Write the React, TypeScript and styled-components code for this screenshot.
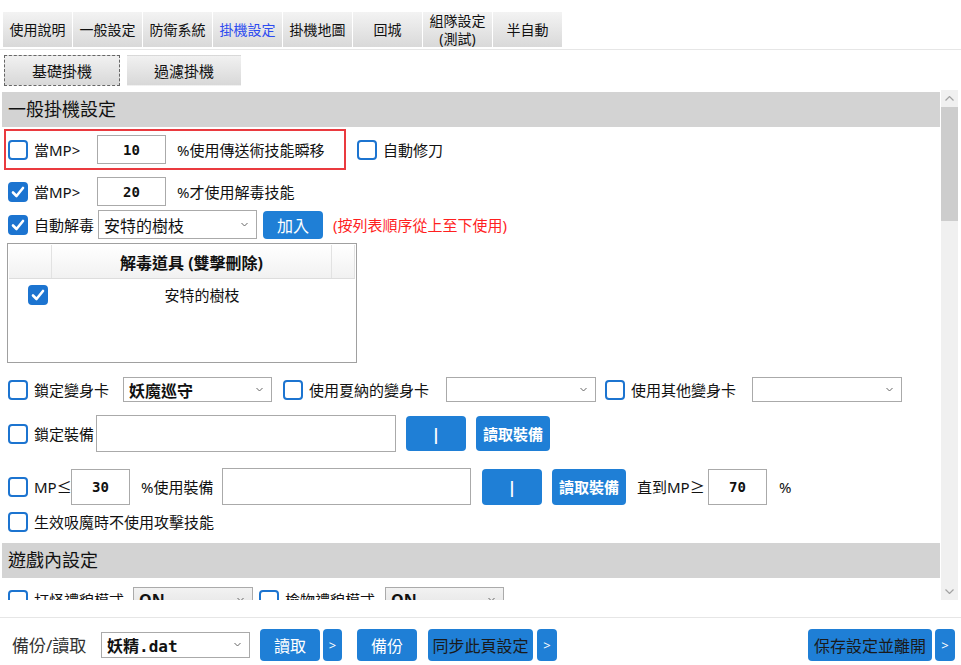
import styled, { createGlobalStyle } from "styled-components";

// 全体スタイル
const GlobalStyle = createGlobalStyle`
  *, *::before, *::after { box-sizing: border-box; }
  html, body { margin: 0; padding: 0; background: #fff; }
  body {
    font-family: "Noto Sans", "Noto Sans CJK TC", sans-serif;
    color: #111;
  }
`;

const BLUE = "#1f7fd6";

const Page = styled.div`
  width: 961px;
  height: 665px;
  display: flex;
  flex-direction: column;
  overflow: hidden;
  background: #fff;
`;

// タブ
const TabBar = styled.div`
  display: flex;
  gap: 1px;
  height: 50px;
  padding: 12px 0 2px 3px;
  border-bottom: 1px solid #e6e6e6;
`;

const Tab = styled.div<{ $active?: boolean }>`
  width: 69px;
  height: 35px;
  display: flex;
  align-items: center;
  justify-content: center;
  text-align: center;
  font-size: 14px;
  line-height: 18px;
  color: ${(p) => (p.$active ? "#2d4bf0" : "#111")};
  background: linear-gradient(#f3f3f3, #d9d9d9);
`;

const TabLines = styled.span`
  display: block;
  margin-top: 1px;
`;

const SubTabBar = styled.div`
  display: flex;
  gap: 7px;
  height: 40px;
  padding: 5px 0 4px 4px;
`;

const SubTab = styled.div<{ $w: number; $focus?: boolean }>`
  width: ${(p) => p.$w}px;
  height: 31px;
  display: flex;
  align-items: center;
  justify-content: center;
  font-size: 15px;
  background: linear-gradient(#f1f1f1, #d8d8d8);
  border: 1px ${(p) => (p.$focus ? "dashed #666" : "solid transparent")};
`;

// スクロール領域
const Body = styled.div`
  display: flex;
  height: 510px;
`;

const Content = styled.div`
  flex: 1;
  overflow: hidden;
  padding: 2px 0 0 2px;
`;

const ScrollBar = styled.div`
  width: 17px;
  margin: 0 3px 0 1px;
  display: flex;
  flex-direction: column;
  background: #f0f0f0;
`;

const ScrollArrow = styled.div`
  height: 17px;
  display: flex;
  align-items: center;
  justify-content: center;
`;

const ScrollThumb = styled.div`
  height: 114px;
  background: #cdcdcd;
`;

const ScrollTrack = styled.div`
  flex: 1;
`;

const SectionHeader = styled.div<{ $mt?: number }>`
  height: 35px;
  margin-top: ${(p) => p.$mt ?? 0}px;
  padding-left: 6px;
  background: #d3d3d3;
  font-size: 18px;
  line-height: 35px;
`;

const Row = styled.div<{ $mt: number; $h: number }>`
  display: flex;
  align-items: center;
  height: ${(p) => p.$h}px;
  margin-top: ${(p) => p.$mt}px;
  padding-left: 6px;
`;

const RedBox = styled.div`
  display: flex;
  align-items: center;
  width: 342px;
  height: 41px;
  margin-left: -4px;
  padding-left: 2px;
  border: 2px solid #ea3a3f;
`;

const Box = styled.span<{ $checked?: boolean; $ml?: number }>`
  flex: none;
  width: 20px;
  height: 20px;
  margin-left: ${(p) => p.$ml ?? 0}px;
  border-radius: 4px;
  border: 2px solid #1c74d0;
  background: ${(p) => (p.$checked ? "#1c74d0" : "#fff")};
  display: flex;
  align-items: center;
  justify-content: center;
`;

const Text = styled.span<{ $w?: number; $ml?: number; $color?: string }>`
  flex: none;
  width: ${(p) => (p.$w ? `${p.$w}px` : "auto")};
  margin-left: ${(p) => p.$ml ?? 6}px;
  font-size: 15px;
  line-height: 20px;
  white-space: nowrap;
  color: ${(p) => p.$color ?? "#111"};
`;

const NumInput = styled.div<{ $w: number; $h: number }>`
  flex: none;
  width: ${(p) => p.$w}px;
  height: ${(p) => p.$h}px;
  border: 1px solid #aaa;
  display: flex;
  align-items: center;
  justify-content: center;
  font-family: "DejaVu Sans Mono", monospace;
  font-weight: bold;
  font-size: 14px;
`;

const TextInput = styled.div<{ $w: number }>`
  flex: none;
  width: ${(p) => p.$w}px;
  height: 37px;
  border: 1px solid #aaa;
`;

const Select = styled.div<{ $w: number; $h: number; $gray?: boolean; $bold?: boolean; $mono?: boolean }>`
  flex: none;
  width: ${(p) => p.$w}px;
  height: ${(p) => p.$h}px;
  border: 1px solid #aaa;
  background: ${(p) => (p.$gray ? "linear-gradient(#f2f2f2, #e3e3e3)" : "#fff")};
  display: flex;
  align-items: center;
  justify-content: space-between;
  padding: 0 8px 0 5px;
  font-size: 16px;
  font-weight: ${(p) => (p.$bold ? "bold" : "normal")};
  font-family: ${(p) =>
    p.$mono ? `"DejaVu Sans Mono", "Noto Sans CJK TC", monospace` : "inherit"};
  white-space: nowrap;
`;

const Button = styled.div<{ $w: number; $h: number; $ml?: number; $dark?: boolean; $size?: number }>`
  flex: none;
  width: ${(p) => p.$w}px;
  height: ${(p) => p.$h}px;
  margin-left: ${(p) => p.$ml ?? 0}px;
  border-radius: 4px;
  background: ${BLUE};
  color: ${(p) => (p.$dark ? "#1a1a1a" : "#fff")};
  display: flex;
  align-items: center;
  justify-content: center;
  font-size: ${(p) => p.$size ?? 16}px;
  white-space: nowrap;
`;

const BoldLabel = styled.span`
  font-weight: bold;
`;

// リスト
const ListBox = styled.div`
  width: 350px;
  height: 120px;
  margin: 4px 0 0 5px;
  border: 1px solid #a0a0a0;
  padding: 1px;
`;

const ListHeader = styled.div`
  display: grid;
  grid-template-columns: 43px 280px 1fr;
  height: 34px;
  background: linear-gradient(#fff, #f1f1f1);
  border-bottom: 1px solid #ddd;
`;

const HeadCell = styled.div`
  border-right: 1px solid #e2e2e2;
  display: flex;
  align-items: center;
  justify-content: center;
  font-weight: bold;
  font-size: 16px;
`;

const ListRow = styled.div`
  display: grid;
  grid-template-columns: 43px 280px;
  align-items: center;
  height: 20px;
  margin-top: 5px;
`;

const ListCheckCell = styled.div`
  padding-left: 19px;
`;

const ListText = styled.div`
  text-align: center;
  padding-left: 20px;
  font-size: 15px;
`;

// フッター
const Footer = styled.div`
  margin-top: 17px;
  height: 48px;
  border-top: 1px solid #e6e6e6;
  display: flex;
  align-items: center;
  padding: 10px 6px 4px 12px;
`;

const FooterLabel = styled.span`
  width: 89px;
  font-size: 17px;
  color: #333;
`;

const Spacer = styled.div`
  flex: 1;
`;

const Chevron = ({ color = "#666" }: { color?: string }) => (
  <svg width="7" height="5" viewBox="0 0 7 5">
    <polyline points="0.5,1 3.5,4 6.5,1" fill="none" stroke={color} strokeWidth="1" />
  </svg>
);

const Check = ({ checked, ml }: { checked?: boolean; ml?: number }) => (
  <Box $checked={checked} $ml={ml}>
    {checked && (
      <svg width="14" height="12" viewBox="0 0 14 12">
        <polyline points="2,6.5 5.5,10 12,2" fill="none" stroke="#fff" strokeWidth="2.6" strokeLinecap="round" strokeLinejoin="round" />
      </svg>
    )}
  </Box>
);

const tabs = ["使用說明", "一般設定", "防衛系統", "掛機設定", "掛機地圖", "回城", "組隊設定\n(測試)", "半自動"];

const App = () => {
  return (
    <Page>
      <GlobalStyle />
      <TabBar>
        {tabs.map((t) => (
          <Tab key={t} $active={t === "掛機設定"}>
            {t.includes("\n") ? (
              <TabLines>
                組隊設定
                <br />
                (測試)
              </TabLines>
            ) : (
              t
            )}
          </Tab>
        ))}
      </TabBar>
      <SubTabBar>
        <SubTab $w={116} $focus>基礎掛機</SubTab>
        <SubTab $w={114}>過濾掛機</SubTab>
      </SubTabBar>

      <Body>
        <Content>
          <SectionHeader>一般掛機設定</SectionHeader>

          <Row $mt={2} $h={41}>
            <RedBox>
              <Check />
              <Text $w={63}>當MP&gt;</Text>
              <NumInput $w={69} $h={29}>10</NumInput>
              <Text $ml={11}>%使用傳送術技能瞬移</Text>
            </RedBox>
            <Check ml={11} />
            <Text>自動修刀</Text>
          </Row>

          <Row $mt={7} $h={29}>
            <Check checked />
            <Text $w={63}>當MP&gt;</Text>
            <NumInput $w={69} $h={29}>20</NumInput>
            <Text $ml={11}>%才使用解毒技能</Text>
          </Row>

          <Row $mt={4} $h={29}>
            <Check checked />
            <Text $w={64}>自動解毒</Text>
            <Select $w={159} $h={29}>
              安特的樹枝
              <Chevron />
            </Select>
            <Button $w={60} $h={28} $ml={6}>加入</Button>
            <Text $ml={10} $color="#ff1f1f">(按列表順序從上至下使用)</Text>
          </Row>

          <ListBox>
            <ListHeader>
              <HeadCell />
              <HeadCell>解毒道具 (雙擊刪除)</HeadCell>
              <HeadCell />
            </ListHeader>
            <ListRow>
              <ListCheckCell>
                <Check checked />
              </ListCheckCell>
              <ListText>安特的樹枝</ListText>
            </ListRow>
          </ListBox>

          <Row $mt={14} $h={25}>
            <Check />
            <Text $w={89}>鎖定變身卡</Text>
            <Select $w={149} $h={25} $bold>
              妖魔巡守
              <Chevron />
            </Select>
            <Check ml={11} />
            <Text $w={137}>使用夏納的變身卡</Text>
            <Select $w={150} $h={25}>
              <span />
              <Chevron />
            </Select>
            <Check ml={9} />
            <Text $w={121}>使用其他變身卡</Text>
            <Select $w={150} $h={25}>
              <span />
              <Chevron />
            </Select>
          </Row>

          <Row $mt={13} $h={37}>
            <Check />
            <Text $w={62}>鎖定裝備</Text>
            <TextInput $w={300} />
            <Button $w={60} $h={35} $ml={10}>
              <BoldLabel>|</BoldLabel>
            </Button>
            <Button $w={74} $h={35} $ml={10} $size={15}>
              <BoldLabel>讀取裝備</BoldLabel>
            </Button>
          </Row>

          <Row $mt={16} $h={37}>
            <Check />
            <Text $w={37}>MP≤</Text>
            <NumInput $w={59} $h={36}>30</NumInput>
            <Text $w={81} $ml={11}>%使用裝備</Text>
            <TextInput $w={249} />
            <Button $w={60} $h={36} $ml={11}>
              <BoldLabel>|</BoldLabel>
            </Button>
            <Button $w={74} $h={36} $ml={10} $size={15}>
              <BoldLabel>讀取裝備</BoldLabel>
            </Button>
            <Text $w={71} $ml={11}>直到MP≥</Text>
            <NumInput $w={59} $h={36}>70</NumInput>
            <Text $ml={12}>%</Text>
          </Row>

          <Row $mt={7} $h={20}>
            <Check />
            <Text>生效吸魔時不使用攻擊技能</Text>
          </Row>

          <SectionHeader $mt={11}>遊戲內設定</SectionHeader>

          <Row $mt={9} $h={25}>
            <Check />
            <Text $w={99}>打怪禮貌模式</Text>
            <Select $w={120} $h={25} $gray $bold>
              ON
              <Chevron />
            </Select>
            <Check ml={6} />
            <Text $w={100}>檢物禮貌模式</Text>
            <Select $w={119} $h={25} $gray $bold>
              ON
              <Chevron />
            </Select>
          </Row>
        </Content>

        <ScrollBar>
          <ScrollArrow>
            <svg width="9" height="5" viewBox="0 0 9 5">
              <polyline points="0.5,4.5 4.5,0.5 8.5,4.5" fill="none" stroke="#a3a3a3" strokeWidth="1.2" />
            </svg>
          </ScrollArrow>
          <ScrollThumb />
          <ScrollTrack />
          <ScrollArrow>
            <svg width="9" height="5" viewBox="0 0 9 5">
              <polyline points="0.5,0.5 4.5,4.5 8.5,0.5" fill="none" stroke="#a3a3a3" strokeWidth="1.2" />
            </svg>
          </ScrollArrow>
        </ScrollBar>
      </Body>

      <Footer>
        <FooterLabel>備份/讀取</FooterLabel>
        <Select $w={149} $h={26} $mono $bold>
          妖精.dat
          <Chevron />
        </Select>
        <Button $w={60} $h={32} $ml={10}>讀取</Button>
        <Button $w={19} $h={32} $ml={3} $size={13}>&gt;</Button>
        <Button $w={60} $h={32} $ml={15}>備份</Button>
        <Button $w={105} $h={32} $ml={11} $dark>同步此頁設定</Button>
        <Button $w={20} $h={32} $ml={4} $size={13}>&gt;</Button>
        <Spacer />
        <Button $w={124} $h={32} $dark>保存設定並離開</Button>
        <Button $w={20} $h={32} $ml={3} $size={13}>&gt;</Button>
      </Footer>
    </Page>
  );
};

export default App;
